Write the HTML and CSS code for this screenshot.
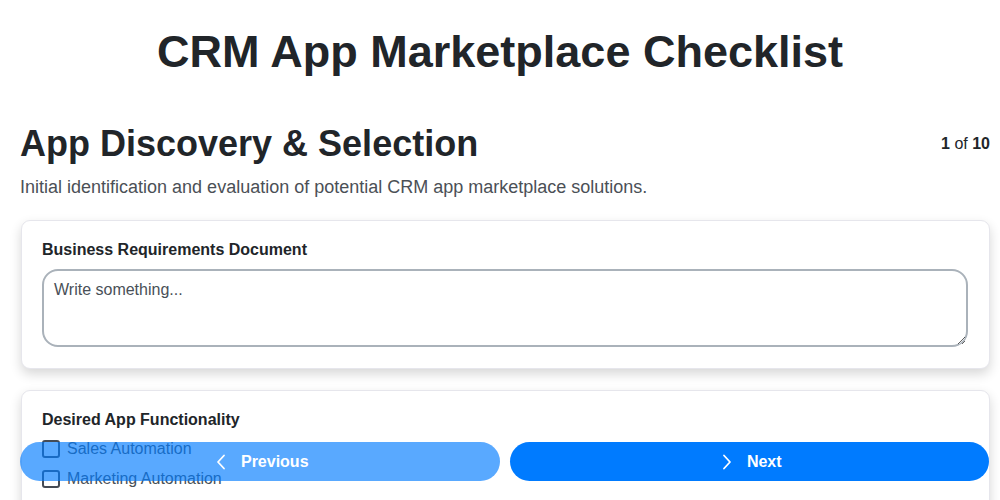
FILE: index.html
```html
<!DOCTYPE html>
<html lang="en">
<head>
<meta charset="utf-8">
<title>CRM App Marketplace Checklist</title>
<link rel="stylesheet" href="styles.css">
</head>
<body>
<h1 class="page-title">CRM App Marketplace Checklist</h1>
<div class="section-head">
  <h2 class="section-title">App Discovery &amp; Selection</h2>
  <div class="counter"><b>1</b> of <b>10</b></div>
</div>
<p class="section-desc">Initial identification and evaluation of potential CRM app marketplace solutions.</p>

<div class="card">
  <label class="field-label" for="brd">Business Requirements Document</label>
  <textarea id="brd" class="field-text" placeholder="Write something..."></textarea>
</div>

<div class="card">
  <div class="field-label">Desired App Functionality</div>
  <label class="check"><span class="box"></span>Sales Automation</label>
  <label class="check"><span class="box"></span>Marketing Automation</label>
  <label class="check"><span class="box"></span>Customer Service</label>
</div>

<div class="nav">
  <button class="btn btn-prev">
    <svg width="20" height="16" viewBox="0 0 20 16"><path d="M13 1.5 L7 8 L13 14.5" fill="none" stroke="#fff" stroke-width="1.8" stroke-linecap="round" stroke-linejoin="round"/></svg>
    <span>Previous</span>
  </button>
  <button class="btn btn-next">
    <svg width="20" height="16" viewBox="0 0 20 16"><path d="M7 1.5 L13 8 L7 14.5" fill="none" stroke="#fff" stroke-width="1.8" stroke-linecap="round" stroke-linejoin="round"/></svg>
    <span>Next</span>
  </button>
</div>
</body>
</html>
```

FILE: styles.css
```css
* { box-sizing: border-box; }
html, body { margin: 0; background: #fff; }
body {
  padding: 0 10px 0 20px;
  width: 1000px;
  font-family: "Liberation Sans", Arial, sans-serif;
  color: #212529;
  overflow: hidden;
  height: 500px;
}
.page-title {
  margin: 28px 0 47px -10px;
  text-align: center;
  font-size: 45px;
  line-height: 48px;
  font-weight: 700;
}
.section-head {
  display: flex;
  justify-content: space-between;
  align-items: center;
}
.section-title {
  margin: 0;
  font-size: 36px;
  line-height: 42px;
  font-weight: 700;
}
.counter { font-size: 16px; }
.section-desc {
  margin: 12px 0 23px;
  font-size: 18px;
  line-height: 20px;
  color: #4b5056;
}
.card {
  border: 1px solid #e6e6ec;
  border-radius: 9px;
  padding: 20px 21px 21px 20px;
  margin: 0 0 21px 1px;
  box-shadow: 0 5px 12px rgba(0,0,0,0.16);
  background: #fff;
}
.field-label {
  display: block;
  font-size: 16px;
  line-height: 18px;
  font-weight: 700;
  margin-bottom: 10px;
}
.field-text {
  display: block;
  width: 100%;
  height: 78px;
  border: 2px solid #aab2ba;
  border-radius: 16px;
  padding: 10px 10px;
  font-family: "Liberation Sans", Arial, sans-serif;
  font-size: 16px;
  color: #212529;
  resize: vertical;
}
.field-text::placeholder { color: #495057; }
.check {
  display: flex;
  align-items: center;
  gap: 7px;
  height: 30px;
  font-size: 16px;
  color: #495057;
}
.check:first-of-type { margin-top: -5px; }
.box {
  width: 18px;
  height: 18px;
  border: 2px solid #454b55;
  border-radius: 3px;
}
.nav {
  position: fixed;
  left: 20px;
  right: 11px;
  bottom: 19px;
  display: flex;
  gap: 10px;
}
.btn {
  flex: 1;
  height: 39px;
  border: none;
  border-radius: 20px;
  background: #007bff;
  color: #fff;
  font-family: "Liberation Sans", Arial, sans-serif;
  font-size: 16px;
  font-weight: 700;
  display: flex;
  align-items: center;
  justify-content: center;
  gap: 10px;
}
.btn-prev { opacity: 0.65; }
```
